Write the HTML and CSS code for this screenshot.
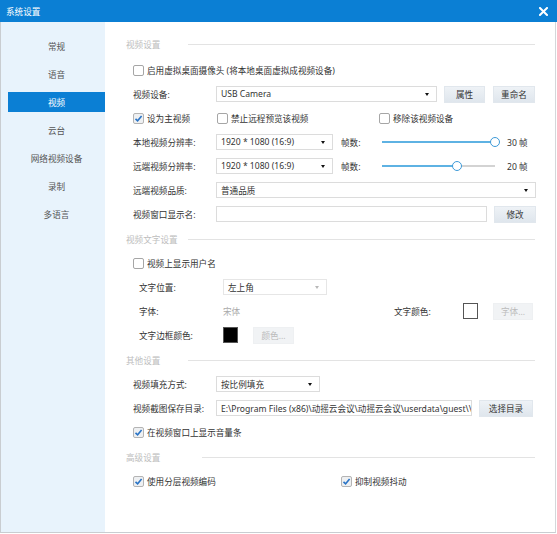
FILE: index.html
```html
<!DOCTYPE html>
<html lang="zh">
<head>
<meta charset="utf-8">
<title>系统设置</title>
<link rel="stylesheet" href="styles.css">
</head>
<body>
<div class="window">
  <div class="titlebar">
    <span class="title">系统设置</span>
    <svg class="close" width="9" height="9" viewBox="0 0 9 9"><path d="M1 1L8 8M8 1L1 8" stroke="#fff" stroke-width="2" stroke-linecap="square"/></svg>
  </div>
  <div class="body">
    <nav class="sidebar">
      <div class="nav-item">常规</div>
      <div class="nav-item">语音</div>
      <div class="nav-item active">视频</div>
      <div class="nav-item">云台</div>
      <div class="nav-item">网络视频设备</div>
      <div class="nav-item">录制</div>
      <div class="nav-item">多语言</div>
    </nav>
    <main class="content">
      <section class="section first">
        <div class="sec-head"><span class="sec-title">视频设置</span><i class="sec-line"></i></div>
        <div class="row first-row">
          <label class="check"><span class="box"></span>启用虚拟桌面摄像头 (将本地桌面虚拟成视频设备)</label>
        </div>
        <div class="row">
          <span class="label">视频设备:</span>
          <div class="select w-device"><span>USB Camera</span><i class="arrow"></i></div>
          <button class="btn b-prop">属性</button>
          <button class="btn b-rename">重命名</button>
        </div>
        <div class="row">
          <label class="check c1"><span class="box on"><svg viewBox="0 0 11 11" width="11" height="11"><path d="M2.5 5.8L4.6 7.8L8.6 3" fill="none" stroke="#2a74c6" stroke-width="1.6"/></svg></span>设为主视频</label>
          <label class="check c2"><span class="box"></span>禁止远程预览该视频</label>
          <label class="check"><span class="box"></span>移除该视频设备</label>
        </div>
        <div class="row">
          <span class="label">本地视频分辨率:</span>
          <div class="select w-res"><span>1920 * 1080 (16:9)</span><i class="arrow"></i></div>
          <span class="fps-label">帧数:</span>
          <div class="slider"><i class="fill" style="width:100%"></i><i class="knob" style="left:100%"></i></div>
          <span class="fps-val">30 帧</span>
        </div>
        <div class="row">
          <span class="label">远端视频分辨率:</span>
          <div class="select w-res"><span>1920 * 1080 (16:9)</span><i class="arrow"></i></div>
          <span class="fps-label">帧数:</span>
          <div class="slider"><i class="fill" style="width:66.7%"></i><i class="knob" style="left:66.7%"></i></div>
          <span class="fps-val">20 帧</span>
        </div>
        <div class="row">
          <span class="label">远端视频品质:</span>
          <div class="select grow"><span>普通品质</span><i class="arrow"></i></div>
        </div>
        <div class="row">
          <span class="label">视频窗口显示名:</span>
          <div class="input grow"></div>
          <button class="btn b-edit">修改</button>
        </div>
      </section>

      <section class="section">
        <div class="sec-head"><span class="sec-title">视频文字设置</span><i class="sec-line"></i></div>
        <div class="row">
          <label class="check"><span class="box"></span>视频上显示用户名</label>
        </div>
        <div class="row indent">
          <span class="label wide">文字位置:</span>
          <div class="select disabled w-pos"><span>左上角</span><i class="arrow"></i></div>
        </div>
        <div class="row indent">
          <span class="label wide">字体:</span>
          <span class="muted font-name">宋体</span>
          <span class="label color-label">文字颜色:</span>
          <span class="swatch white"></span>
          <button class="btn disabled b-font">字体...</button>
        </div>
        <div class="row indent">
          <span class="label wide">文字边框颜色:</span>
          <span class="swatch black"></span>
          <button class="btn disabled b-color">颜色...</button>
        </div>
      </section>

      <section class="section">
        <div class="sec-head"><span class="sec-title">其他设置</span><i class="sec-line"></i></div>
        <div class="row">
          <span class="label">视频填充方式:</span>
          <div class="select w-fill"><span>按比例填充</span><i class="arrow"></i></div>
        </div>
        <div class="row">
          <span class="label">视频截图保存目录:</span>
          <div class="input w-path"><span class="path">E:\Program Files (x86)\动摇云会议\动摇云会议\userdata\guest\\</span></div>
          <button class="btn b-dir">选择目录</button>
        </div>
        <div class="row">
          <label class="check"><span class="box on"><svg viewBox="0 0 11 11" width="11" height="11"><path d="M2.5 5.8L4.6 7.8L8.6 3" fill="none" stroke="#2a74c6" stroke-width="1.6"/></svg></span>在视频窗口上显示音量条</label>
        </div>
      </section>

      <section class="section">
        <div class="sec-head"><span class="sec-title t-adv">高级设置</span><i class="sec-line"></i></div>
        <div class="row">
          <label class="check c-adv"><span class="box on"><svg viewBox="0 0 11 11" width="11" height="11"><path d="M2.5 5.8L4.6 7.8L8.6 3" fill="none" stroke="#2a74c6" stroke-width="1.6"/></svg></span>使用分层视频编码</label>
          <label class="check"><span class="box on"><svg viewBox="0 0 11 11" width="11" height="11"><path d="M2.5 5.8L4.6 7.8L8.6 3" fill="none" stroke="#2a74c6" stroke-width="1.6"/></svg></span>抑制视频抖动</label>
        </div>
      </section>
    </main>
  </div>
</div>
</body>
</html>
```

FILE: styles.css
```css
* { box-sizing: border-box; }
html, body { margin: 0; padding: 0; background: #fff; }
body {
  font-family: "Noto Sans", "Noto Sans CJK SC", sans-serif;
  font-size: 8.6px;
  color: #333;
}
.window {
  width: 557px;
  height: 534px;
  display: flex;
  flex-direction: column;
}
.titlebar {
  height: 22px;
  background: #0b7fd4;
  color: #fff;
  display: flex;
  align-items: center;
  justify-content: space-between;
  padding: 0 9px 0 6px;
  flex: none;
}
.title { font-size: 8.6px; }
.close { display: block; }
.body {
  flex: 1;
  display: flex;
  border-left: 1px solid #c9cdd1;
  border-right: 1px solid #d4d7da;
  border-bottom: 1px solid #c9cdd1;
  margin-right: 1px;
  margin-bottom: 1px;
}
.sidebar {
  width: 104px;
  background: #e8f3fc;
  padding-top: 14px;
  flex: none;
}
.nav-item {
  height: 20px;
  margin: 0 0 8px 7px;
  display: flex;
  align-items: center;
  justify-content: center;
  color: #555;
}
.nav-item.active {
  background: #0b7fd4;
  color: #fff;
}
.content {
  flex: 1;
  padding: 10px 19px 0 21px;
}
.section { margin-top: 1px; }
.section.first { margin-top: 0; }
.sec-head {
  height: 24px;
  display: flex;
  align-items: center;
}
.sec-title {
  width: 62px;
  color: #bdbdbd;
  flex: none;
}
.sec-title.t-adv { width: 76px; }
.sec-line {
  flex: 1;
  height: 1px;
  background: #e3e3e3;
  margin-right: 1px;
}
.row {
  height: 24px;
  display: flex;
  align-items: center;
  padding-left: 7px;
}
.row.first-row { margin-top: 2px; }
.row.indent { padding-left: 13px; }
.label { width: 83px; flex: none; }
.label.wide { width: 84px; }
.check {
  display: flex;
  align-items: center;
  flex: none;
}
.check.c1 { width: 84px; }
.check.c2 { width: 162px; }
.check.c-adv { width: 208px; }
.box {
  width: 11px;
  height: 11px;
  border: 1px solid #a6a6a6;
  border-radius: 2px;
  background: #fff;
  margin-right: 3px;
  position: relative;
  flex: none;
}
.box.on { background: #eef0f2; border-color: #b4b4b4; }
.box svg { position: absolute; left: -1px; top: -1px; }
.select, .input {
  height: 16px;
  border: 1px solid #dcdcdc;
  background: #fff;
  display: flex;
  align-items: center;
  padding-left: 4px;
  position: relative;
  flex: none;
  overflow: hidden;
}
.select span, .input span { white-space: nowrap; }
.grow { flex: 1; }
.arrow {
  position: absolute;
  right: 7px;
  top: 6px;
  width: 0;
  height: 0;
  border-left: 2.5px solid transparent;
  border-right: 2.5px solid transparent;
  border-top: 3px solid #111;
}
.select.disabled { border-color: #e6e6e6; }
.select.disabled .arrow { border-top-color: #b8b8b8; }
.w-device { width: 221px; }
.w-res { width: 117px; }
.w-pos { width: 104px; }
.w-fill { width: 104px; }
.w-path { width: 256px; }
.path { color: #333; }
.btn {
  height: 17px;
  border: 1px solid #e1e7ed;
  background: linear-gradient(#eef2f6, #dfe6ed);
  font: inherit;
  color: #333;
  padding: 0;
  margin-left: 7px;
  flex: none;
}
.btn.disabled {
  background: #f1f3f5;
  border-color: #eef0f2;
  color: #bbb;
}
.b-prop { width: 41px; }
.b-rename { width: 42px; margin-left: 8px; }
.b-edit { width: 42px; }
.b-font { width: 40px; margin-left: 15px; }
.b-color { width: 41px; margin-left: 15px; }
.b-dir { width: 54px; }
.fps-label { width: 41px; margin-left: 8px; flex: none; }
.slider {
  width: 113px;
  height: 2px;
  background: #d3d3d3;
  position: relative;
  flex: none;
}
.fill {
  position: absolute;
  left: 0;
  top: 0;
  height: 2px;
  background: #5eb2e3;
}
.knob {
  position: absolute;
  top: -4px;
  width: 10px;
  height: 10px;
  margin-left: -5px;
  border: 1.5px solid #3d9ad8;
  border-radius: 50%;
  background: #fff;
}
.fps-val { margin-left: 12px; }
.muted { color: #aaa; }
.font-name { width: 171px; flex: none; }
.color-label { width: 69px; }
.swatch {
  width: 15px;
  height: 16px;
  border: 1px solid #555;
  flex: none;
}
.swatch.white { background: #fff; }
.swatch.black { background: #000; }
```
